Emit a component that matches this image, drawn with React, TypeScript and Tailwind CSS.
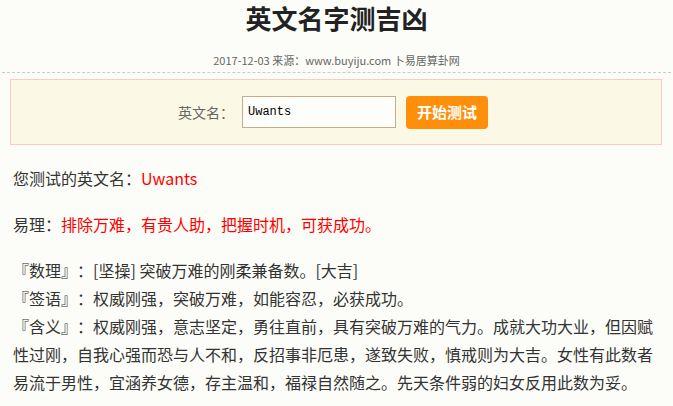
import React from 'react';

const cjk = { fontFamily: '"Noto Sans CJK SC", "Noto Sans", sans-serif' };

const App: React.FC = () => {
  return (
    <div className="min-h-[406px] w-[673px] bg-[#fcfdf8] text-[#333] [text-spacing-trim:space-all]" style={cjk}>
      {/* Header */}
      <div className="mx-[2px] border-b border-dashed border-[#cccccc] pb-[2px]">
        <h1 className="text-center text-[26px] font-bold leading-[36px] text-[#222]">英文名字测吉凶</h1>
        <p className="mt-[14px] text-center text-[11px] leading-[20px] text-[#666]">
          2017-12-03 来源：www.buyiju.com 卜易居算卦网
        </p>
      </div>

      {/* Form box */}
      <div className="ml-[10px] mt-[6px] flex h-[66px] w-[652px] items-center justify-center border border-[#f9cdc4] bg-[#fcf8e6]">
        <label className="mr-[8px] text-[14px] text-[#666]">英文名：</label>
        <input
          type="text"
          defaultValue="Uwants"
          className="h-[32px] w-[154px] border border-[#c9ab8c] bg-[#fdfef9] px-[5px] text-[12px] text-black outline-none"
          style={{ fontFamily: '"Liberation Mono", monospace' }}
        />
        <button className="ml-[10px] mr-[6px] flex h-[33px] w-[82px] items-center justify-center rounded-[4px] bg-[#fe8f0b] text-[15px] font-bold text-white">
          开始测试
        </button>
      </div>

      {/* Result */}
      <div className="px-[13px] pt-[19px] text-[16px] leading-[28px]">
        <p className="mb-[18px]">
          您测试的英文名：<span className="text-[#ff0000]">Uwants</span>
        </p>
        <p className="mb-[18px]">
          易理：<span className="text-[#ff0000]">排除万难，有贵人助，把握时机，可获成功。</span>
        </p>
        <p>
          『数理』：[坚操] 突破万难的刚柔兼备数。[大吉]
          <br />
          『签语』：权威刚强，突破万难，如能容忍，必获成功。
          <br />
          『含义』：权威刚强，意志坚定，勇往直前，具有突破万难的气力。成就大功大业，但因赋性过刚，自我心强而恐与人不和，反招事非厄患，遂致失败，慎戒则为大吉。女性有此数者易流于男性，宜涵养女德，存主温和，福禄自然随之。先天条件弱的妇女反用此数为妥。
        </p>
      </div>
    </div>
  );
};

export default App;
